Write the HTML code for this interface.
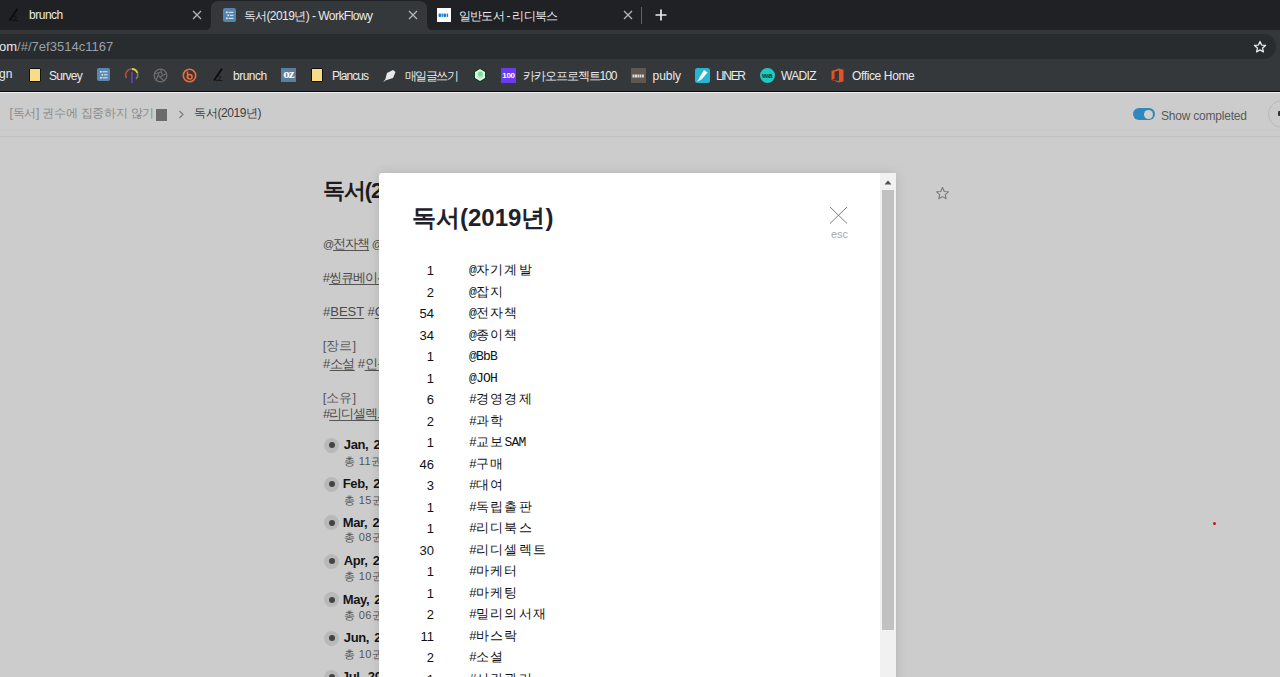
<!DOCTYPE html><html><head><meta charset="utf-8"><style>
*{box-sizing:border-box}
html,body{margin:0;padding:0;width:1280px;height:677px;overflow:hidden;background:#cccccc;font-family:"Liberation Sans",sans-serif}
.a{position:absolute}
.t{position:absolute;white-space:nowrap}
.r{position:absolute;left:0;width:500px;height:14px;line-height:14px;font-family:"Liberation Mono",monospace;font-size:13px;letter-spacing:-0.8px;color:#111;white-space:nowrap}
.n{position:absolute;left:0;top:1px;width:55px;text-align:right;font-family:"Liberation Sans",sans-serif;letter-spacing:0}
.tx{position:absolute;left:90px;top:1px}
.k{letter-spacing:1.2px;font-size:13px}

</style></head><body>
<div class="a" style="left:0;top:0;width:1280px;height:30px;background:#202124"></div>
<svg class="a" style="left:203px;top:0" width="232" height="31" viewBox="0 0 232 31"><path d="M0 31 Q8 31 8 23 L8 9 Q8 1 16 1 L216 1 Q224 1 224 9 L224 23 Q224 31 232 31 Z" fill="#35383b"/></svg>
<svg class="a" style="left:8px;top:8px" width="12" height="14" viewBox="0 0 12 14"><path d="M9.5 0.8 L1.5 12.5" stroke="#0b0b0c" stroke-width="1.6"/><path d="M3 11 Q6 6 8.5 9 Q8 12 4 12.5 L10 12.5" stroke="#111" stroke-width="0.9" fill="none"/></svg>
<svg class="a" style="left:192px;top:10px" width="10" height="10" viewBox="0 0 10 10"><path d="M1 1L9 9M9 1L1 9" stroke="#b4b7bc" stroke-width="1.25"/></svg>
<svg class="a" style="left:407.5px;top:10px" width="10" height="10" viewBox="0 0 10 10"><path d="M1 1L9 9M9 1L1 9" stroke="#b4b7bc" stroke-width="1.25"/></svg>
<svg class="a" style="left:622.5px;top:10px" width="10" height="10" viewBox="0 0 10 10"><path d="M1 1L9 9M9 1L1 9" stroke="#b4b7bc" stroke-width="1.25"/></svg>
<div class="a" style="left:223px;top:8px;width:13px;height:14px;background:#5584ad;border-radius:2px"></div>
<svg class="a" style="left:223px;top:8px" width="13" height="14" viewBox="0 0 13 14"><g fill="#e8f0f7"><rect x="3" y="3.5" width="1.6" height="1.6"/><rect x="5.5" y="3.8" width="5" height="1"/><rect x="4.5" y="6.5" width="1.6" height="1.6"/><rect x="7" y="6.8" width="3.5" height="1"/><rect x="3" y="9.5" width="1.6" height="1.6"/><rect x="5.5" y="9.8" width="5" height="1"/></g></svg>
<div class="a" style="left:437px;top:8px;width:14px;height:14px;background:#fdfdfd"></div>
<svg class="a" style="left:437px;top:8px" width="14" height="15" viewBox="0 0 14 15"><g fill="#1a7fd0"><rect x="1.5" y="5.5" width="2.6" height="3.5" rx="1"/><rect x="4.6" y="5.5" width="1.3" height="3.5"/><rect x="6.4" y="5.5" width="2.8" height="3.5" rx="1"/><rect x="9.8" y="5.5" width="1.3" height="3.5"/></g></svg>
<div class="a" style="left:641px;top:7px;width:1px;height:17px;background:#5f6368"></div>
<svg class="a" style="left:655px;top:9px" width="12" height="12" viewBox="0 0 12 12"><path d="M6 0.5V11.5M0.5 6H11.5" stroke="#e8eaed" stroke-width="1.7"/></svg>
<div class="a" style="left:0;top:30px;width:1280px;height:61px;background:#35383b"></div>
<div class="a" style="left:-40px;top:34px;width:1316px;height:25px;background:#292c2f;border-radius:12.5px"></div>
<svg class="a" style="left:1253px;top:40px" width="14" height="14" viewBox="0 0 24 24"><path d="M12 2.5l2.8 6.2 6.7.6-5.1 4.5 1.5 6.6L12 17l-5.9 3.4 1.5-6.6-5.1-4.5 6.7-.6z" fill="none" stroke="#e8eaed" stroke-width="2.2" stroke-linejoin="round"/></svg>
<div class="a" style="left:29px;top:68px;width:12px;height:14px;background:#f8dd86;border:1px solid #111;border-radius:1px"></div>
<div class="a" style="left:97px;top:68px;width:13px;height:13px;background:#5b87b0;border-radius:2px"></div>
<svg class="a" style="left:97px;top:68px" width="13" height="13" viewBox="0 0 13 13"><g fill="#e6eef6"><rect x="3" y="3" width="1.6" height="1.6"/><rect x="5.5" y="3.3" width="5" height="1"/><rect x="4.5" y="6" width="1.6" height="1.6"/><rect x="7" y="6.3" width="3.5" height="1"/><rect x="3" y="9" width="1.6" height="1.6"/><rect x="5.5" y="9.3" width="5" height="1"/></g></svg>
<svg class="a" style="left:124px;top:67px" width="16" height="17" viewBox="0 0 16 17"><path d="M2.5 11 A6 6 0 0 1 8 2" stroke="#b84a4a" stroke-width="1.6" fill="none"/><path d="M8 2 A6 6 0 0 1 13.5 6" stroke="#d6cf4a" stroke-width="1.8" fill="none"/><path d="M13.5 6 A6 6 0 0 1 12 12" stroke="#5e8a5e" stroke-width="1.6" fill="none"/><path d="M8 5V16" stroke="#6a3fb0" stroke-width="1.8"/></svg>
<svg class="a" style="left:153px;top:68px" width="15" height="15" viewBox="0 0 15 15"><circle cx="7.5" cy="7.5" r="6.3" stroke="#6d6d6d" stroke-width="1.3" fill="none"/><path d="M7.5 1.2L9.5 7.5M13.5 5.5L7 9M11 13L5.5 7.5M3 12.5L6 5M1.5 6L8 4" stroke="#6d6d6d" stroke-width="1.1" fill="none"/></svg>
<svg class="a" style="left:182px;top:68px" width="15" height="15" viewBox="0 0 15 15"><circle cx="7.5" cy="7.5" r="6.2" stroke="#ef6c3a" stroke-width="1.6" fill="none"/><path d="M5.5 3.5V10.5" stroke="#ef6c3a" stroke-width="1.5"/><circle cx="7.8" cy="8.8" r="2.3" stroke="#ef6c3a" stroke-width="1.5" fill="none"/></svg>
<svg class="a" style="left:212px;top:68px" width="12" height="14" viewBox="0 0 12 14"><path d="M10 0.8 L2 12.5" stroke="#0a0a0a" stroke-width="1.8"/><path d="M3.5 11 Q6.5 6 9 9 Q8.5 12 4.5 12.5 L10.5 12.5" stroke="#151515" stroke-width="0.9" fill="none"/></svg>
<div class="a" style="left:281px;top:68px;width:15px;height:14px;background:#5b7e9c"></div>
<div class="a" style="left:281px;top:67px;width:15px;height:14px;font-family:'Liberation Serif',serif;font-weight:bold;font-size:13px;line-height:14px;color:#fff;letter-spacing:-1px;text-align:center">oz</div>
<div class="a" style="left:311px;top:68px;width:12px;height:14px;background:#f8dd86;border:1px solid #111;border-radius:1px"></div>
<svg class="a" style="left:383px;top:69px" width="14" height="13" viewBox="0 0 14 13"><path d="M2 11.5 L4 4 L10 1 L12.5 3 L10 9 Z" fill="#e9e9e9"/><path d="M1 12.5L4 9" stroke="#ddd" stroke-width="1"/></svg>
<svg class="a" style="left:473px;top:67px" width="14" height="16" viewBox="0 0 14 16"><path d="M7 0.8 L13 4.3 L13 11.7 L7 15.2 L1 11.7 L1 4.3 Z" fill="#0f3d1e"/><path d="M7 2 L12 4.9 L12 11.1 L7 14 L2 11.1 L2 4.9 Z" fill="#d9f7e1"/><circle cx="7.3" cy="7" r="2.6" fill="#7ddc98"/><path d="M4.5 9.5 L7 11 L9.5 9.5" stroke="#9bc9a8" stroke-width="0.8" fill="none"/></svg>
<div class="a" style="left:501px;top:67.5px;width:15px;height:15px;background:#6a3cf0"></div>
<div class="a" style="left:501px;top:71px;width:15px;height:9px;font-family:'Liberation Sans';font-weight:bold;font-size:8px;line-height:9px;color:#fff;text-align:center;letter-spacing:-0.3px">100</div>
<div class="a" style="left:631px;top:68px;width:15px;height:15px;background:#5f5850"></div>
<svg class="a" style="left:631px;top:68px" width="15" height="15" viewBox="0 0 15 15"><g fill="#e0ddd8"><rect x="1.5" y="6.5" width="2" height="3"/><rect x="4" y="6.5" width="2" height="3"/><rect x="6.5" y="6.5" width="2" height="3"/><rect x="9" y="6.5" width="1.2" height="3"/><rect x="10.8" y="6.5" width="2" height="3"/></g></svg>
<div class="a" style="left:695px;top:67.5px;width:15px;height:15px;background:#28b5d3;border-radius:2.5px"></div>
<svg class="a" style="left:695px;top:67.5px" width="15" height="15" viewBox="0 0 15 15"><path d="M9 2 L12.5 4.5 L7 11 L4.5 9.5 Z" fill="#fff"/><path d="M4.5 9.5 L7 11 L5 12.5 L3.5 12 Z" fill="#fff"/><path d="M2.5 13 L4 12" stroke="#fff" stroke-width="1"/></svg>
<div class="a" style="left:759.5px;top:67.5px;width:15px;height:15px;background:#1ec9c2;border-radius:50%"></div>
<div class="a" style="left:759.5px;top:72px;width:15px;height:6px;font-family:'Liberation Sans';font-weight:bold;font-size:8px;line-height:7px;color:#0d3b3a;text-align:center;letter-spacing:-0.3px">wa</div>
<svg class="a" style="left:831px;top:67.5px" width="13" height="15" viewBox="0 0 13 15"><path d="M0.5 3 L8 0.5 L12.5 1.8 L12.5 13.2 L8 14.5 L0.5 12 L8 13 L8 2.5 L3.5 3.8 L3.5 10.8 L0.5 12 Z" fill="#e8501f"/></svg>
<div class="a" style="left:0;top:91px;width:1280px;height:1px;background:#0a0a0a"></div>
<div class="a" style="left:0;top:92px;width:1280px;height:1px;background:#f0f0f0"></div>
<div class="a" style="left:0;top:93px;width:1280px;height:584px;background:#cccccc"></div>
<div class="a" style="left:0;top:130px;width:1280px;height:1px;background:#c8c8c8"></div>
<div class="a" style="left:0;top:135.5px;width:1280px;height:1px;background:#c0c0c0"></div>
<div class="a" style="left:156px;top:109px;width:11px;height:12px;background:#6b6b6b"></div>
<svg class="a" style="left:178px;top:110px" width="7" height="9" viewBox="0 0 7 9"><path d="M1.5 1L5 4.5L1.5 8" stroke="#7a7a7a" stroke-width="1.1" fill="none"/></svg>
<div class="a" style="left:1133px;top:108px;width:22px;height:12px;background:#2f88bc;border-radius:6px"></div>
<div class="a" style="left:1144px;top:109.5px;width:9px;height:9px;background:#cfcfcf;border-radius:50%"></div>
<div class="a" style="left:1268px;top:100px;width:28px;height:28px;border:1px solid #b9b9b9;border-radius:50%"></div>
<div class="a" style="left:1278px;top:111px;width:4px;height:5px;background:#333;border-radius:1px"></div>
<svg class="a" style="left:935px;top:186px" width="15" height="15" viewBox="0 0 24 24"><path d="M12 2.5l2.8 6.2 6.7.6-5.1 4.5 1.5 6.6L12 17l-5.9 3.4 1.5-6.6-5.1-4.5 6.7-.6z" fill="none" stroke="#7a7a7a" stroke-width="1.8" stroke-linejoin="round"/></svg>
<div class="a" style="left:1213px;top:522px;width:3px;height:3px;background:#c8102e;border-radius:50%"></div>
<div class="a" style="left:324.0px;top:437.9px;width:15px;height:15px;background:#b9b9b9;border-radius:50%"></div>
<div class="a" style="left:328.5px;top:442.4px;width:6px;height:6px;background:#444;border-radius:50%"></div>
<div class="a" style="left:324.0px;top:476.5px;width:15px;height:15px;background:#b9b9b9;border-radius:50%"></div>
<div class="a" style="left:328.5px;top:481.0px;width:6px;height:6px;background:#444;border-radius:50%"></div>
<div class="a" style="left:324.0px;top:515.1px;width:15px;height:15px;background:#b9b9b9;border-radius:50%"></div>
<div class="a" style="left:328.5px;top:519.6px;width:6px;height:6px;background:#444;border-radius:50%"></div>
<div class="a" style="left:324.0px;top:553.7px;width:15px;height:15px;background:#b9b9b9;border-radius:50%"></div>
<div class="a" style="left:328.5px;top:558.2px;width:6px;height:6px;background:#444;border-radius:50%"></div>
<div class="a" style="left:324.0px;top:592.3px;width:15px;height:15px;background:#b9b9b9;border-radius:50%"></div>
<div class="a" style="left:328.5px;top:596.8px;width:6px;height:6px;background:#444;border-radius:50%"></div>
<div class="a" style="left:324.0px;top:630.9px;width:15px;height:15px;background:#b9b9b9;border-radius:50%"></div>
<div class="a" style="left:328.5px;top:635.4px;width:6px;height:6px;background:#444;border-radius:50%"></div>
<div class="a" style="left:324.0px;top:669.5px;width:15px;height:15px;background:#b9b9b9;border-radius:50%"></div>
<div class="a" style="left:328.5px;top:674.0px;width:6px;height:6px;background:#444;border-radius:50%"></div>
<div class="t" id="t0" style='left:29.00px;top:5.40px;font-size:12px;line-height:20px;color:#e8eaed;font-family:"Liberation Sans",sans-serif;font-weight:normal;letter-spacing:-0.481px'>brunch</div>
<div class="t" id="t1" style='left:243.50px;top:5.50px;font-size:12px;line-height:20px;color:#e8eaed;font-family:"Liberation Sans",sans-serif;font-weight:normal;letter-spacing:-0.548px'>독서(2019년) - WorkFlowy</div>
<div class="t" id="t2" style='left:459.00px;top:5.50px;font-size:12px;line-height:20px;color:#e8eaed;font-family:"Liberation Sans",sans-serif;font-weight:normal;letter-spacing:-0.767px'>일반도서 - 리디북스</div>
<div class="t" id="t3" style='left:-1.00px;top:37.00px;font-size:13px;line-height:20px;color:#9aa0a6;font-family:"Liberation Sans",sans-serif;font-weight:normal;letter-spacing:0.014px'><span style="color:#e8eaed">om</span>/#/7ef3514c1167</div>
<div class="t" id="t4" style='left:-1.00px;top:63.90px;font-size:12px;line-height:20px;color:#e8eaed;font-family:"Liberation Sans",sans-serif;font-weight:normal'>gn</div>
<div class="t" id="t5" style='left:48.90px;top:65.90px;font-size:12px;line-height:20px;color:#e8eaed;font-family:"Liberation Sans",sans-serif;font-weight:normal;letter-spacing:-0.712px'>Survey</div>
<div class="t" id="t6" style='left:233.00px;top:65.90px;font-size:12px;line-height:20px;color:#e8eaed;font-family:"Liberation Sans",sans-serif;font-weight:normal;letter-spacing:-0.501px'>brunch</div>
<div class="t" id="t7" style='left:332.00px;top:65.90px;font-size:12px;line-height:20px;color:#e8eaed;font-family:"Liberation Sans",sans-serif;font-weight:normal;letter-spacing:-0.951px'>Plancus</div>
<div class="t" id="t8" style='left:405.00px;top:65.90px;font-size:12px;line-height:20px;color:#e8eaed;font-family:"Liberation Sans",sans-serif;font-weight:normal;letter-spacing:-1.625px'>매일글쓰기</div>
<div class="t" id="t9" style='left:523.25px;top:65.90px;font-size:12px;line-height:20px;color:#e8eaed;font-family:"Liberation Sans",sans-serif;font-weight:normal;letter-spacing:-1.092px'>카카오프로젝트100</div>
<div class="t" id="t10" style='left:652.50px;top:65.90px;font-size:12px;line-height:20px;color:#e8eaed;font-family:"Liberation Sans",sans-serif;font-weight:normal;letter-spacing:-0.047px'>publy</div>
<div class="t" id="t11" style='left:716.00px;top:65.90px;font-size:12px;line-height:20px;color:#e8eaed;font-family:"Liberation Sans",sans-serif;font-weight:normal;letter-spacing:-1.336px'>LINER</div>
<div class="t" id="t12" style='left:781.00px;top:65.90px;font-size:12px;line-height:20px;color:#e8eaed;font-family:"Liberation Sans",sans-serif;font-weight:normal;letter-spacing:-0.655px'>WADIZ</div>
<div class="t" id="t13" style='left:852.00px;top:65.90px;font-size:12px;line-height:20px;color:#e8eaed;font-family:"Liberation Sans",sans-serif;font-weight:normal;letter-spacing:-0.372px'>Office Home</div>
<div class="t" id="t14" style='left:9.50px;top:102.90px;font-size:12px;line-height:20px;color:#8a8a8a;font-family:"Liberation Sans",sans-serif;font-weight:normal;letter-spacing:-0.245px'>[독서] 권수에 집중하지 않기</div>
<div class="t" id="t15" style='left:194.40px;top:102.90px;font-size:12px;line-height:20px;color:#3c3c3c;font-family:"Liberation Sans",sans-serif;font-weight:normal;letter-spacing:-0.436px'>독서(2019년)</div>
<div class="t" id="t16" style='left:1161.00px;top:105.50px;font-size:12px;line-height:20px;color:#5a5a5a;font-family:"Liberation Sans",sans-serif;font-weight:normal;letter-spacing:-0.209px'>Show completed</div>
<div class="t" id="t17" style='left:322.80px;top:181.00px;font-size:22px;line-height:20px;color:#1c1c1c;font-family:"Liberation Sans",sans-serif;font-weight:bold;letter-spacing:-1px'>독서(2019년)</div>
<div class="t" id="t18" style='left:322.90px;top:233.50px;font-size:13px;line-height:20px;color:#4a4a4a;font-family:"Liberation Sans",sans-serif;font-weight:normal;letter-spacing:-1px'><span style="font-size:11px">@</span><span style="text-decoration:underline;text-decoration-color:#555;text-underline-offset:2px">전자책</span> <span style="font-size:11px">@</span><span style="text-decoration:underline;text-decoration-color:#555;text-underline-offset:2px">종이책</span></div>
<div class="t" id="t19" style='left:322.70px;top:268.10px;font-size:13px;line-height:20px;color:#4a4a4a;font-family:"Liberation Sans",sans-serif;font-weight:normal;letter-spacing:-1px'>#<span style="text-decoration:underline;text-decoration-color:#555;text-underline-offset:2px">씽큐베이션</span></div>
<div class="t" id="t20" style='left:323.00px;top:302.00px;font-size:13px;line-height:20px;color:#4a4a4a;font-family:"Liberation Sans",sans-serif;font-weight:normal'>#<span style="text-decoration:underline;text-decoration-color:#555;text-underline-offset:2px">BEST</span> #<span style="text-decoration:underline;text-decoration-color:#555;text-underline-offset:2px">CHOICE</span></div>
<div class="t" id="t21" style='left:322.80px;top:335.80px;font-size:13px;line-height:20px;color:#5a5a5a;font-family:"Liberation Sans",sans-serif;font-weight:normal'>[장르]</div>
<div class="t" id="t22" style='left:323.00px;top:354.00px;font-size:13px;line-height:20px;color:#4a4a4a;font-family:"Liberation Sans",sans-serif;font-weight:normal;letter-spacing:-0.5px'>#<span style="text-decoration:underline;text-decoration-color:#555;text-underline-offset:2px">소설</span> #<span style="text-decoration:underline;text-decoration-color:#555;text-underline-offset:2px">인문</span></div>
<div class="t" id="t23" style='left:322.80px;top:388.00px;font-size:13px;line-height:20px;color:#5a5a5a;font-family:"Liberation Sans",sans-serif;font-weight:normal'>[소유]</div>
<div class="t" id="t24" style='left:323.00px;top:403.90px;font-size:13px;line-height:20px;color:#4a4a4a;font-family:"Liberation Sans",sans-serif;font-weight:normal;letter-spacing:-1px'>#<span style="text-decoration:underline;text-decoration-color:#555;text-underline-offset:2px">리디셀렉트</span></div>
<div class="t" id="t25" style='left:343.80px;top:434.90px;font-size:13px;line-height:20px;color:#151515;font-family:"Liberation Sans",sans-serif;font-weight:bold;letter-spacing:-0.4px;word-spacing:2px'>Jan, 2019</div>
<div class="t" id="t26" style='left:343.90px;top:450.80px;font-size:11px;line-height:20px;color:#555555;font-family:"Liberation Sans",sans-serif;font-weight:normal;letter-spacing:0.4px'>총 11권</div>
<div class="t" id="t27" style='left:342.80px;top:473.70px;font-size:13px;line-height:20px;color:#151515;font-family:"Liberation Sans",sans-serif;font-weight:bold;letter-spacing:-0.4px;word-spacing:2px'>Feb, 2019</div>
<div class="t" id="t28" style='left:343.90px;top:489.60px;font-size:11px;line-height:20px;color:#555555;font-family:"Liberation Sans",sans-serif;font-weight:normal;letter-spacing:0.4px'>총 15권</div>
<div class="t" id="t29" style='left:342.80px;top:512.50px;font-size:13px;line-height:20px;color:#151515;font-family:"Liberation Sans",sans-serif;font-weight:bold;letter-spacing:-0.4px;word-spacing:2px'>Mar, 2019</div>
<div class="t" id="t30" style='left:343.90px;top:527.40px;font-size:11px;line-height:20px;color:#555555;font-family:"Liberation Sans",sans-serif;font-weight:normal;letter-spacing:0.4px'>총 08권</div>
<div class="t" id="t31" style='left:343.80px;top:551.30px;font-size:13px;line-height:20px;color:#151515;font-family:"Liberation Sans",sans-serif;font-weight:bold;letter-spacing:-0.4px;word-spacing:2px'>Apr, 2019</div>
<div class="t" id="t32" style='left:343.90px;top:566.20px;font-size:11px;line-height:20px;color:#555555;font-family:"Liberation Sans",sans-serif;font-weight:normal;letter-spacing:0.4px'>총 10권</div>
<div class="t" id="t33" style='left:342.80px;top:590.10px;font-size:13px;line-height:20px;color:#151515;font-family:"Liberation Sans",sans-serif;font-weight:bold;letter-spacing:-0.4px;word-spacing:2px'>May, 2019</div>
<div class="t" id="t34" style='left:343.90px;top:605.00px;font-size:11px;line-height:20px;color:#555555;font-family:"Liberation Sans",sans-serif;font-weight:normal;letter-spacing:0.4px'>총 06권</div>
<div class="t" id="t35" style='left:343.80px;top:627.90px;font-size:13px;line-height:20px;color:#151515;font-family:"Liberation Sans",sans-serif;font-weight:bold;letter-spacing:-0.4px;word-spacing:2px'>Jun, 2019</div>
<div class="t" id="t36" style='left:343.90px;top:643.80px;font-size:11px;line-height:20px;color:#555555;font-family:"Liberation Sans",sans-serif;font-weight:normal;letter-spacing:0.4px'>총 10권</div>
<div class="t" id="t37" style='left:341.80px;top:666.70px;font-size:13px;line-height:20px;color:#151515;font-family:"Liberation Sans",sans-serif;font-weight:bold;letter-spacing:-0.4px;word-spacing:2px'>Jul, 2019</div>
<div class="a" style="left:379px;top:173px;width:517px;height:520px;background:#fff;border-radius:3px 0 0 0;box-shadow:0 0 12px rgba(0,0,0,0.12)">
<div class="a" style="left:33px;top:30px;font-size:24px;line-height:30px;font-weight:bold;color:#1e222c;white-space:nowrap">독서(2019년)</div>
<svg class="a" style="left:450px;top:33px" width="20" height="20" viewBox="0 0 20 20"><path d="M1 1L18 17.5M18 1L1 17.5" stroke="#7d7d7d" stroke-width="1"/></svg>
<div class="a" style="left:452px;top:54px;font-size:11px;line-height:14px;color:#a8a8a8">esc</div>
<div class="r" style="top:90.0px"><span class="n">1</span><span class="tx">@<span class="k">자기계발</span></span></div>
<div class="r" style="top:111.5px"><span class="n">2</span><span class="tx">@<span class="k">잡지</span></span></div>
<div class="r" style="top:133.0px"><span class="n">54</span><span class="tx">@<span class="k">전자책</span></span></div>
<div class="r" style="top:154.5px"><span class="n">34</span><span class="tx">@<span class="k">종이책</span></span></div>
<div class="r" style="top:176.0px"><span class="n">1</span><span class="tx">@BbB</span></div>
<div class="r" style="top:197.5px"><span class="n">1</span><span class="tx">@JOH</span></div>
<div class="r" style="top:219.0px"><span class="n">6</span><span class="tx">#<span class="k">경영경제</span></span></div>
<div class="r" style="top:240.5px"><span class="n">2</span><span class="tx">#<span class="k">과학</span></span></div>
<div class="r" style="top:262.0px"><span class="n">1</span><span class="tx">#<span class="k">교보</span>SAM</span></div>
<div class="r" style="top:283.5px"><span class="n">46</span><span class="tx">#<span class="k">구매</span></span></div>
<div class="r" style="top:305.0px"><span class="n">3</span><span class="tx">#<span class="k">대여</span></span></div>
<div class="r" style="top:326.5px"><span class="n">1</span><span class="tx">#<span class="k">독립출판</span></span></div>
<div class="r" style="top:348.0px"><span class="n">1</span><span class="tx">#<span class="k">리디북스</span></span></div>
<div class="r" style="top:369.5px"><span class="n">30</span><span class="tx">#<span class="k">리디셀렉트</span></span></div>
<div class="r" style="top:391.0px"><span class="n">1</span><span class="tx">#<span class="k">마케터</span></span></div>
<div class="r" style="top:412.5px"><span class="n">1</span><span class="tx">#<span class="k">마케팅</span></span></div>
<div class="r" style="top:434.0px"><span class="n">2</span><span class="tx">#<span class="k">밀리의서재</span></span></div>
<div class="r" style="top:455.5px"><span class="n">11</span><span class="tx">#<span class="k">바스락</span></span></div>
<div class="r" style="top:477.0px"><span class="n">2</span><span class="tx">#<span class="k">소셜</span></span></div>
<div class="r" style="top:498.5px"><span class="n">1</span><span class="tx">#<span class="k">시간관리</span></span></div>
<div class="a" style="left:501px;top:0;width:16px;height:520px;background:#f1f1f1"></div>
<svg class="a" style="left:505px;top:5px" width="8" height="8" viewBox="0 0 8 8"><path d="M0.5 6.5L4 2.5L7.5 6.5Z" fill="#505050"/></svg>
<div class="a" style="left:503px;top:16.5px;width:12px;height:440.5px;background:#c1c1c1"></div>
</div>
</body></html>
